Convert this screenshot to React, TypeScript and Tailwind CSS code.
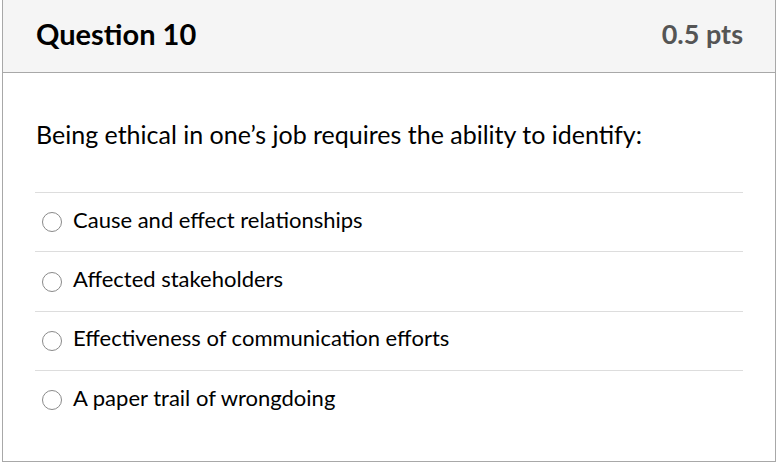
export default function App() {
  const answers = [
    "Cause and effect relationships",
    "Affected stakeholders",
    "Effectiveness of communication efforts",
    "A paper trail of wrongdoing",
  ];

  return (
    <div className="w-[782px] h-[464px] bg-white font-['Lato',sans-serif] text-black">
      <div className="ml-[2px] w-[774px] h-[462px] border-x border-b border-[#a8a8a8]">
        <div className="h-[73px] bg-[#f5f5f5] border-b border-[#a8a8a8] flex items-center justify-between pl-[33px] pr-[32px]">
          <h2 className="text-[29px] font-bold leading-none pb-[6px]">Question 10</h2>
          <span className="text-[27px] font-bold text-[#555] leading-none pb-[5px]">0.5 pts</span>
        </div>
        <div className="px-[32px] pt-[45px]">
          <p className="text-[25px] leading-[32px] pl-[1px]">
            Being ethical in one’s job requires the ability to identify:
          </p>
          <div className="mt-[42px]">
            {answers.map((a) => (
              <label
                key={a}
                className="flex items-center h-[59.4px] border-t border-[#ddd] pl-[7px] gap-[11px]"
              >
                <span className="w-[20px] h-[20px] rounded-full border border-[#8a8a8a] bg-white" />
                <span className="text-[22px] leading-[28px] pb-[5px]">{a}</span>
              </label>
            ))}
          </div>
        </div>
      </div>
    </div>
  );
}
